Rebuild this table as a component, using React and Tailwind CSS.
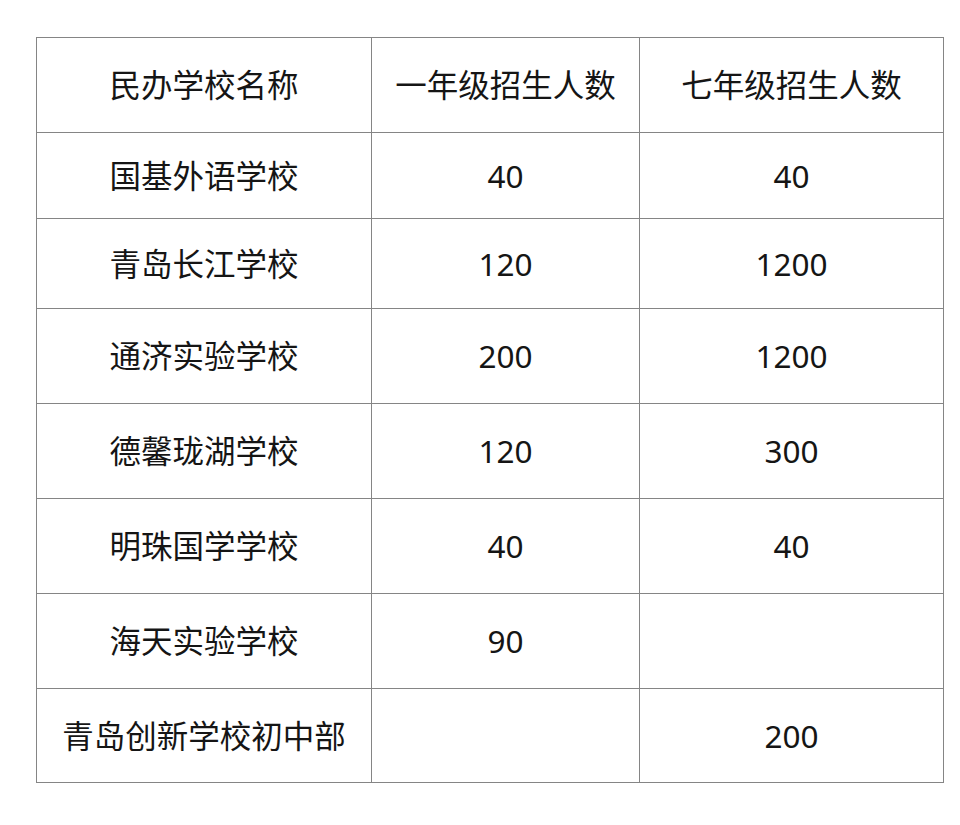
import React from "react";

const rows = [
  ["国基外语学校", "40", "40", "h-[86px]"],
  ["青岛长江学校", "120", "1200", "h-[90px]"],
  ["通济实验学校", "200", "1200", "h-[95px]"],
  ["德馨珑湖学校", "120", "300", "h-[95px]"],
  ["明珠国学学校", "40", "40", "h-[95px]"],
  ["海天实验学校", "90", "", "h-[95px]"],
  ["青岛创新学校初中部", "", "200", "h-[94px]"],
];

const cell = "border-[1.5px] border-[#858585] text-center align-middle p-0";

export default function App() {
  return (
    <div
      className="w-[960px] h-[825px] bg-white pt-[37px] pl-[36px] text-[#151515]"
      style={{ fontFamily: '"Noto Sans", "Noto Sans CJK SC", sans-serif' }}
    >
      <table className="border-collapse table-fixed w-[907px] text-[31.5px] leading-none">
        <colgroup>
          <col className="w-[335px]" />
          <col className="w-[268px]" />
          <col className="w-[304px]" />
        </colgroup>
        <thead>
          <tr className="h-[95px]">
            <th className={`${cell} font-normal`}>民办学校名称</th>
            <th className={`${cell} font-normal`}>一年级招生人数</th>
            <th className={`${cell} font-normal`}>七年级招生人数</th>
          </tr>
        </thead>
        <tbody>
          {rows.map(([name, a, b, h]) => (
            <tr key={name} className={h}>
              <td className={cell}>{name}</td>
              <td className={cell}>{a}</td>
              <td className={cell}>{b}</td>
            </tr>
          ))}
        </tbody>
      </table>
    </div>
  );
}
